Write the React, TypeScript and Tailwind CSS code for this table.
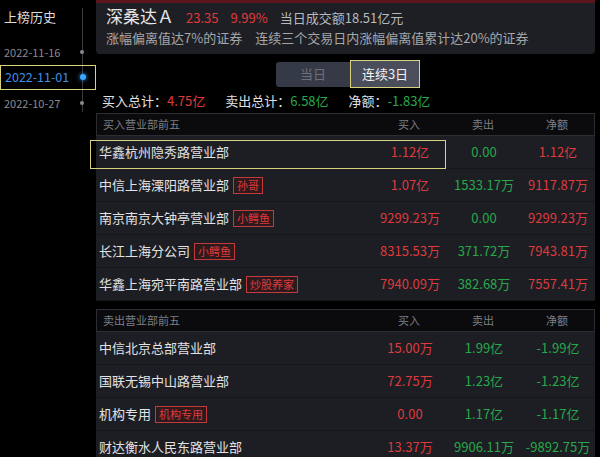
import React from "react"

type Row = { name: string; tag?: string; buy: string; sell: string; net: string; netUp: boolean }

const buyRows: Row[] = [
  { name: "华鑫杭州隐秀路营业部", buy: "1.12亿", sell: "0.00", net: "1.12亿", netUp: true },
  { name: "中信上海溧阳路营业部", tag: "孙哥", buy: "1.07亿", sell: "1533.17万", net: "9117.87万", netUp: true },
  { name: "南京南京大钟亭营业部", tag: "小鳄鱼", buy: "9299.23万", sell: "0.00", net: "9299.23万", netUp: true },
  { name: "长江上海分公司", tag: "小鳄鱼", buy: "8315.53万", sell: "371.72万", net: "7943.81万", netUp: true },
  { name: "华鑫上海宛平南路营业部", tag: "炒股养家", buy: "7940.09万", sell: "382.68万", net: "7557.41万", netUp: true },
]

const sellRows: Row[] = [
  { name: "中信北京总部营业部", buy: "15.00万", sell: "1.99亿", net: "-1.99亿", netUp: false },
  { name: "国联无锡中山路营业部", buy: "72.75万", sell: "1.23亿", net: "-1.23亿", netUp: false },
  { name: "机构专用", tag: "机构专用", buy: "0.00", sell: "1.17亿", net: "-1.17亿", netUp: false },
  { name: "财达衡水人民东路营业部", buy: "13.37万", sell: "9906.11万", net: "-9892.75万", netUp: false },
]

const dates = ["2022-11-16", "2022-11-01", "2022-10-27"]

function Table({ title, rows, highlightFirst }: { title: string; rows: Row[]; highlightFirst?: boolean }) {
  return (
    <div className="mr-[5px] w-[499px]">
      <div className="flex h-[23px] items-center border border-[#2c2d33] bg-[#0b0b0d] text-[11px] text-[#7d7f86]">
        <div className="flex-1 pl-[6px]">{title}</div>
        <div className="w-[74px] text-center">买入</div>
        <div className="w-[74px] text-center">卖出</div>
        <div className="w-[74px] text-center">净额</div>
      </div>
      {rows.map((r, i) => (
        <div
          key={r.name}
          className="relative flex h-[33px] items-center border-b border-[#15161a] bg-[#1d1e23] text-[13px]"
        >
          {highlightFirst && i === 0 && (
            <div className="absolute left-[-6px] top-[4px] h-[29px] w-[356px] border-[1.5px] border-[#d8d37a]" />
          )}
          <div className="flex flex-1 items-center gap-[4px] pl-[3px] text-[#e2e2e4]">
            <span>{r.name}</span>
            {r.tag && (
              <span className="flex h-[17px] items-center border border-[#c23a3a] bg-[#2c1a1c] px-[3px] text-[11px] text-[#e0393c]">
                {r.tag}
              </span>
            )}
          </div>
          <div className="w-[74px] text-center text-[#df3a3d]">{r.buy}</div>
          <div className="w-[74px] text-center text-[#27a84a]">{r.sell}</div>
          <div className={`w-[74px] text-center ${r.netUp ? "text-[#df3a3d]" : "text-[#27a84a]"}`}>{r.net}</div>
        </div>
      ))}
    </div>
  )
}

export default function App() {
  return (
    <div
      className="flex h-[457px] w-[600px] overflow-hidden bg-black"
      style={{ fontFamily: '"Noto Sans CJK SC", "Noto Sans", sans-serif' }}
    >
      {/* sidebar */}
      <div className="relative w-[96px] shrink-0">
        <div className="absolute left-[82px] top-[8px] h-[104px] w-px bg-[#3a3b40]" />
        <div className="pl-[4px] pt-[8px] text-[13px] leading-[18px] text-[#dcdcdc]">上榜历史</div>
        <div className="mt-[13px] flex flex-col">
          {dates.map((d, i) =>
            i === 1 ? (
              <div key={d} className="relative flex h-[25px] items-center border-[1.5px] border-[#d8d37a] pl-[4px]">
                <span className="text-[12.5px] text-[#3d8fe8]">{d}</span>
                <span className="absolute left-[79px] top-[8px] h-[6px] w-[6px] rounded-full bg-[#3aa9ff] shadow-[0_0_4px_#3aa9ff]" />
              </div>
            ) : (
              <div key={d} className="relative flex h-[26px] items-center pl-[4px]">
                <span className="text-[11px] text-[#8a8b90]">{d}</span>
                <span className="absolute left-[80px] top-[11px] h-[4px] w-[4px] rounded-full bg-[#8a8b90]" />
              </div>
            )
          )}
        </div>
      </div>

      {/* main */}
      <div className="flex flex-1 flex-col">
        <div className="mr-[5px] h-[54px] shrink-0 rounded-b-[4px] border-t-[3px] border-[#5a161b] bg-[#1e1f24] pl-[10px]">
          <div className="flex items-baseline gap-[12px] pt-[2px] leading-[22px]">
            <span className="text-[17px] text-[#e6e6e8]">深桑达Ａ</span>
            <span className="text-[13px] text-[#e0393c]">23.35</span>
            <span className="text-[13px] text-[#e0393c]">9.99%</span>
            <span className="text-[13px] text-[#b8b9bd]">当日成交额18.51亿元</span>
          </div>
          <div className="flex gap-[13px] text-[13px] leading-[18px] text-[#a6a7ab]">
            <span>涨幅偏离值达7%的证券</span>
            <span>连续三个交易日内涨幅偏离值累计达20%的证券</span>
          </div>
        </div>

        {/* toggle */}
        <div className="mt-[6px] flex justify-center">
          <div className="flex items-center">
            <div className="flex h-[25px] w-[74px] items-center justify-center rounded-l-[3px] bg-[#363946] text-[13px] text-[#6d707b]">
              当日
            </div>
            <div className="flex h-[28px] w-[70px] items-center justify-center border-[1.5px] border-[#d8d37a] bg-[#4a4d5a] text-[13px] text-[#f2f2f2]">
              连续3日
            </div>
          </div>
        </div>

        {/* totals */}
        <div className="mt-[1px] flex h-[24px] shrink-0 items-center pl-[6px] text-[13px]">
          <span className="text-[#e2e2e4]">买入总计：</span>
          <span className="text-[#e0393c]">4.75亿</span>
          <span className="ml-[20px] text-[#e2e2e4]">卖出总计：</span>
          <span className="text-[#27a84a]">6.58亿</span>
          <span className="ml-[20px] text-[#e2e2e4]">净额：</span>
          <span className="text-[#27a84a]">-1.83亿</span>
        </div>

        <div className="shrink-0">
          <Table title="买入营业部前五" rows={buyRows} highlightFirst />
        </div>
        <div className="h-[8px] shrink-0" />
        <div className="shrink-0">
          <Table title="卖出营业部前五" rows={sellRows} />
        </div>
      </div>
    </div>
  )
}
